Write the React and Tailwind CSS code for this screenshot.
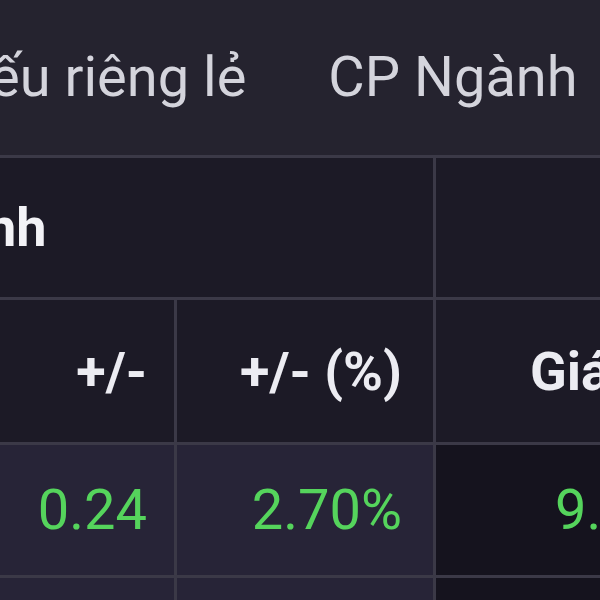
export default function App() {
  return (
    <div className="w-[600px] h-[600px] overflow-hidden bg-[#1c1a26] font-['Roboto','Noto_Sans',sans-serif]">
      {/* tab bar */}
      <div className="h-[158px] bg-[#25232f] flex items-center border-b-[3px] border-[#3b3947] text-[56px] text-[#d4d4dc] whitespace-nowrap overflow-hidden">
        <span className="ml-[-10px] pb-[2px]">ếu riêng lẻ</span>
        <span className="ml-[82px] pb-[2px]">CP Ngành</span>
      </div>
      {/* group header */}
      <div className="h-[142px] flex border-b-[3px] border-[#3b3947]">
        <div className="w-[436px] border-r-[3px] border-[#3b3947] flex items-center overflow-hidden">
          <span className="ml-[-14px] text-[54px] font-bold text-[#f2f2f6] whitespace-nowrap">nh</span>
        </div>
        <div className="flex-1"></div>
      </div>
      {/* column header */}
      <div className="h-[145px] flex border-b-[3px] border-[#3b3947] text-[54px] font-bold text-[#ececf2] whitespace-nowrap">
        <div className="w-[177px] border-r-[3px] border-[#3b3947] flex items-center justify-end pr-[27px]">+/-</div>
        <div className="w-[259px] border-r-[3px] border-[#3b3947] flex items-center justify-end pr-[31px]">+/- (%)</div>
        <div className="flex-1 flex items-center pl-[94px] overflow-hidden">Giá</div>
      </div>
      {/* data row */}
      <div className="h-[133px] flex border-b-[3px] border-[#3b3947] text-[56px] text-[#55d45c] whitespace-nowrap">
        <div className="w-[177px] bg-[#272437] border-r-[3px] border-[#3b3947] flex items-center justify-end pr-[27px]">0.24</div>
        <div className="w-[259px] bg-[#272437] border-r-[3px] border-[#3b3947] flex items-center justify-end pr-[31px]">2.70%</div>
        <div className="flex-1 bg-[#15131e] flex items-center pl-[119px] overflow-hidden">9.15</div>
      </div>
      {/* next row */}
      <div className="h-[60px] flex">
        <div className="w-[177px] bg-[#272437] border-r-[3px] border-[#3b3947]"></div>
        <div className="w-[259px] bg-[#272437] border-r-[3px] border-[#3b3947]"></div>
        <div className="flex-1 bg-[#15131e]"></div>
      </div>
    </div>
  );
}
